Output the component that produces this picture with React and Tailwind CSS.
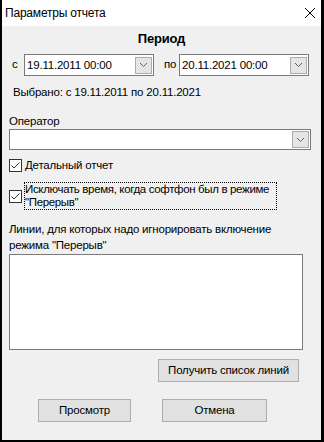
import React from 'react';

function Chevron() {
  return (
    <svg width="9" height="6" viewBox="0 0 9 6" className="block">
      <path d="M1 1 L4.5 4.5 L8 1" fill="none" stroke="#606060" strokeWidth="1" />
    </svg>
  );
}

// combobox with the little dropdown button on the right
function Combo({ value, className }) {
  return (
    <div className={`flex items-center bg-white border border-[#7a7a7a] ${className}`}>
      <span className="flex-1 pl-[2px] leading-[16px] truncate">{value}</span>
      <div className="w-[17px] h-[17px] mr-[1px] flex items-center justify-center bg-[#e5e5e5] border border-[#acacac]">
        <Chevron />
      </div>
    </div>
  );
}

function CheckBox() {
  return (
    <div className="w-[13px] h-[13px] shrink-0 bg-white border border-[#333333] flex items-center justify-center">
      <svg width="11" height="11" viewBox="0 0 11 11" className="block">
        <path d="M1.5 5.5 L4 8 L9.5 2.5" fill="none" stroke="#333333" strokeWidth="1" />
      </svg>
    </div>
  );
}

function Button({ children, className }) {
  return (
    <div className={`h-[23px] flex items-center justify-center bg-[#e1e1e1] border border-[#adadad] ${className}`}>
      {children}
    </div>
  );
}

export default function App() {
  return (
    <div
      className="w-[324px] h-[442px] border-l-2 border-r-[3px] border-b-2 border-black bg-[#f0f0f0] text-[11.5px] tracking-[-0.2px] text-black flex flex-col"
      style={{ fontFamily: '"Liberation Sans", Arial, sans-serif' }}
    >
      {/* Title bar */}
      <div className="h-[26px] bg-white flex items-center justify-between pl-[3px] pr-[5px]">
        <span className="text-[12px]">Параметры отчета</span>
        <svg width="12" height="12" viewBox="0 0 12 12" className="block">
          <path d="M1 1 L11 11 M11 1 L1 11" stroke="#000" strokeWidth="1" />
        </svg>
      </div>

      {/* Period */}
      <div className="mt-[5px] text-center font-bold text-[13px] leading-[16px]">Период</div>
      <div className="mt-[7px] flex items-center pl-[10px]">
        <span className="w-[12px]">с</span>
        <Combo value="19.11.2011 00:00" className="w-[130px] h-[22px]" />
        <span className="w-[15px] ml-[10px]">по</span>
        <Combo value="20.11.2021 00:00" className="w-[130px] h-[22px]" />
      </div>
      <div className="mt-[8px] pl-[11px] leading-[16px]">Выбрано: с 19.11.2011 по 20.11.2021</div>

      {/* Operator */}
      <div className="mt-[13px] pl-[7px] leading-[16px]">Оператор</div>
      <div className="pl-[7px]">
        <Combo value="" className="w-[302px] h-[21px]" />
      </div>

      {/* Checkboxes */}
      <div className="mt-[9px] pl-[7px] flex items-center gap-[3px] h-[13px]">
        <CheckBox />
        <span className="leading-[13px]">Детальный отчет</span>
      </div>
      <div className="mt-[10px] pl-[7px] flex items-center gap-[2px]">
        <CheckBox />
        <div className="w-[253px] border border-dotted border-black leading-[13px] whitespace-nowrap tracking-[-0.35px]">
          Исключать время, когда софтфон был в режиме
          <br />
          "Перерыв"
        </div>
      </div>

      {/* Lines */}
      <div className="mt-[11px] pl-[7px] pr-[10px] leading-[16px]">
        Линии, для которых надо игнорировать включение режима "Перерыв"
      </div>
      <div className="mt-[1px] ml-[7px] w-[294px] h-[96px] bg-white border border-[#7a7a7a]" />

      <div className="mt-[9px] ml-[156px]">
        <Button className="w-[141px]">Получить список линий</Button>
      </div>

      <div className="mt-[17px] flex">
        <Button className="ml-[36px] w-[93px]">Просмотр</Button>
        <Button className="ml-[31px] w-[105px]">Отмена</Button>
      </div>
    </div>
  );
}
